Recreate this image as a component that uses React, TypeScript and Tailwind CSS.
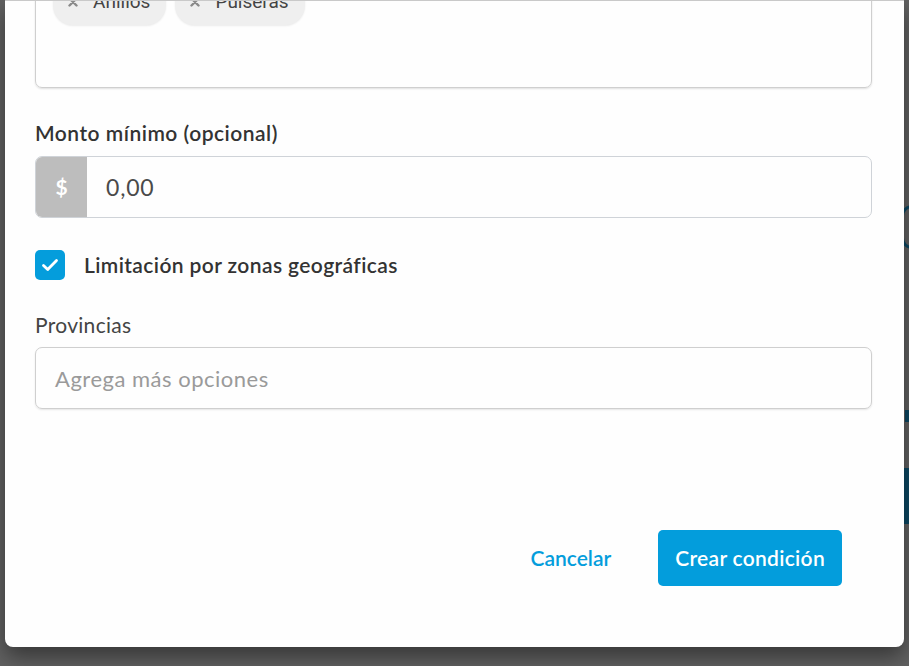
import React from "react";

const chips = ["Anillos", "Pulseras"];

function Chip({ label }: { label: string }) {
  return (
    <div className="flex h-[46px] items-center gap-[15px] rounded-[20px] bg-[#efefef] pl-[15px] pr-[16px] shadow-[0_1px_2px_rgba(0,0,0,0.08)]">
      <svg width="10" height="10" viewBox="0 0 10 10">
        <path d="M1.5 1.5l7 7M8.5 1.5l-7 7" stroke="#8a8a8a" strokeWidth="2.4" strokeLinecap="round" />
      </svg>
      <span className="font-['Roboto',sans-serif] text-[19px] text-[#444]">{label}</span>
    </div>
  );
}

export default function App() {
  return (
    <div className="relative h-[666px] w-[909px] overflow-hidden bg-[#626262] font-['Lato',sans-serif]">
      {/* page behind the overlay */}
      <div className="absolute right-0 top-[468px] h-[56px] w-[10px] bg-[#0c4863]" />
      <div className="absolute right-[-14px] top-[205px] h-[44px] w-[22px] rounded-full border-[3px] border-[#0c4863]" />
      <div className="absolute right-0 top-[410px] h-[12px] w-[4px] bg-[#0c4863]" />

      <div className="relative mx-[5px] flex h-[647px] flex-col overflow-hidden rounded-b-[8px] border-t border-[#c9c9c9] bg-[#fefefe] shadow-[0_10px_22px_rgba(0,0,0,0.45)]">
        <div className="flex-1 overflow-hidden">
          <div className="-mt-[61px] pl-[30px] pr-[32px]">
            <div className="h-[148px] rounded-[7px] border border-[#cfcfcf] pl-[17px] pt-[38px] shadow-[0_1px_2px_rgba(0,0,0,0.12)]">
              <div className="flex gap-[9px]">
                {chips.map((c) => (
                  <Chip key={c} label={c} />
                ))}
              </div>
            </div>

            <div className="mt-[33px] text-[21px] font-semibold leading-[24px] tracking-[0.5px] text-[#333]">
              Monto mínimo (opcional)
            </div>
            <div className="mt-[11px] flex h-[62px] overflow-hidden rounded-[7px] border border-[#cfd3d8]">
              <div className="flex w-[51px] items-center justify-center bg-[#bdbdbd] text-[21px] font-bold text-white">
                $
              </div>
              <div className="flex flex-1 items-center pl-[19px] text-[23px] tracking-[0.8px] text-[#4a4a4a]">0,00</div>
            </div>

            <div className="mt-[32px] flex items-center gap-[19px]">
              <div className="flex h-[30px] w-[30px] items-center justify-center rounded-[5px] bg-[#049ddc]">
                <svg width="18" height="14" viewBox="0 0 18 14">
                  <path d="M2.5 7.5l4.2 4 8.8-9" fill="none" stroke="#fff" strokeWidth="2.8" strokeLinecap="round" strokeLinejoin="round" />
                </svg>
              </div>
              <span className="text-[21px] font-semibold leading-[30px] tracking-[0.4px] text-[#333]">
                Limitación por zonas geográficas
              </span>
            </div>

            <div className="mt-[33px] text-[21px] leading-[24px] tracking-[0.3px] text-[#444]">Provincias</div>
            <div className="mt-[10px] flex h-[62px] items-center rounded-[7px] border border-[#cfcfcf] pl-[19px] shadow-[0_1px_2px_rgba(0,0,0,0.1)]">
              <span className="text-[22px] tracking-[0.5px] text-[#9a9a9a]">Agrega más opciones</span>
            </div>
          </div>
        </div>

        <div className="flex items-center justify-end gap-[47px] pb-[61px] pr-[62px]">
          <button className="text-[21px] font-semibold text-[#049ddc]">Cancelar</button>
          <button className="h-[56px] rounded-[5px] bg-[#039ddc] px-[17px] text-[21px] font-semibold tracking-[0.3px] text-white">
            Crear condición
          </button>
        </div>
      </div>
    </div>
  );
}
